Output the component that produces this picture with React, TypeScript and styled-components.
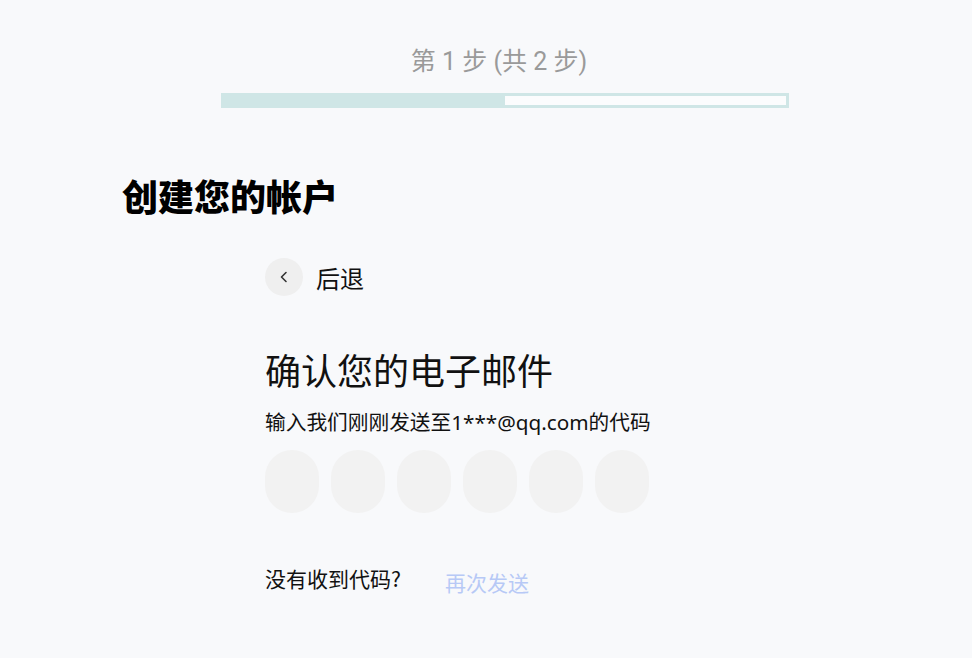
import React from "react";
import styled, { createGlobalStyle } from "styled-components";

const GlobalStyle = createGlobalStyle`
  body {
    margin: 0;
    background: #f8f9fb;
    font-family: "Noto Sans", "Noto Sans CJK SC", sans-serif;
    color: #111;
  }
`;

const Page = styled.div`
  padding-top: 47px;
  min-height: 658px;
  box-sizing: border-box;
`;

const StepHeader = styled.div`
  margin-left: 221px;
  width: 568px;
  display: flex;
  flex-direction: column;
  align-items: center;
`;

const StepText = styled.div`
  font-family: Roboto, "Noto Sans CJK SC", sans-serif;
  font-size: 25px;
  line-height: 30px;
  color: #9a9a9a;
  margin-right: 12px;
  white-space: pre;
`;

const ProgressTrack = styled.div`
  margin-top: 16px;
  width: 100%;
  height: 15px;
  box-sizing: border-box;
  border: 3px solid #cfe6e6;
  background: #fbfcfd;
  display: flex;
`;

const ProgressFill = styled.div`
  height: 100%;
  background: #cfe6e6;
`;

const Title = styled.h1`
  margin: 65px 0 0 122px;
  font-family: "Noto Sans CJK SC", sans-serif;
  font-size: 36px;
  line-height: 44px;
  font-weight: 900;
  color: #000;
`;

const Content = styled.div`
  margin-left: 265px;
  display: flex;
  flex-direction: column;
  align-items: flex-start;
`;

const BackRow = styled.button`
  margin-top: 41px;
  display: flex;
  align-items: center;
  gap: 13px;
  padding: 0;
  border: none;
  background: none;
  cursor: pointer;
  font-family: "Noto Sans CJK SC", sans-serif;
  font-size: 24px;
  color: #111;
`;

const BackCircle = styled.span`
  width: 38px;
  height: 38px;
  border-radius: 50%;
  background: #efefef;
  display: flex;
  align-items: center;
  justify-content: center;
`;

const Heading = styled.h2`
  margin: 51px 0 0;
  font-family: "Noto Sans CJK SC", sans-serif;
  font-size: 36px;
  line-height: 44px;
  font-weight: 400;
  color: #111;
`;

const Subtitle = styled.p`
  margin: 17px 0 0;
  font-size: 20.7px;
  line-height: 28px;
  color: #111;
`;

const CodeRow = styled.div`
  margin-top: 14px;
  display: flex;
  gap: 12px;
`;

const CodeBox = styled.input`
  width: 54px;
  height: 63px;
  box-sizing: border-box;
  border: none;
  border-radius: 27px;
  background: #f2f2f2;
  outline: none;
  text-align: center;
  font-size: 24px;
`;

const ResendRow = styled.div`
  margin-top: 51px;
  display: flex;
  align-items: flex-start;
  gap: 44px;
`;

const ResendLabel = styled.span`
  font-family: "Noto Sans CJK SC", sans-serif;
  font-size: 21px;
  line-height: 28px;
  color: #111;
`;

const ResendButton = styled.button`
  margin-top: 4px;
  padding: 0;
  border: none;
  background: none;
  font-family: "Noto Sans CJK SC", sans-serif;
  font-size: 21px;
  line-height: 28px;
  color: #b7c9f6;
  cursor: pointer;
`;

const ChevronLeft = () => (
  <svg width="14" height="14" viewBox="0 0 14 14" fill="none">
    <path d="M9 2.5L4.5 7L9 11.5" stroke="#333" strokeWidth="1.6" strokeLinecap="round" strokeLinejoin="round" />
  </svg>
);

export default function App() {
  const step = 1;
  const total = 2;
  return (
    <>
      <GlobalStyle />
      <Page>
        <StepHeader>
          <StepText>第 {step} 步 (共 {total} 步)</StepText>
          <ProgressTrack>
            <ProgressFill style={{ width: `${(step / total) * 100}%` }} />
          </ProgressTrack>
        </StepHeader>

        <Title>创建您的帐户</Title>

        <Content>
          <BackRow>
            <BackCircle>
              <ChevronLeft />
            </BackCircle>
            后退
          </BackRow>

          <Heading>确认您的电子邮件</Heading>
          <Subtitle>输入我们刚刚发送至1***@qq.com的代码</Subtitle>

          <CodeRow>
            {Array.from({ length: 6 }).map((_, i) => (
              <CodeBox key={i} maxLength={1} />
            ))}
          </CodeRow>

          <ResendRow>
            <ResendLabel>没有收到代码?</ResendLabel>
            <ResendButton>再次发送</ResendButton>
          </ResendRow>
        </Content>
      </Page>
    </>
  );
}
